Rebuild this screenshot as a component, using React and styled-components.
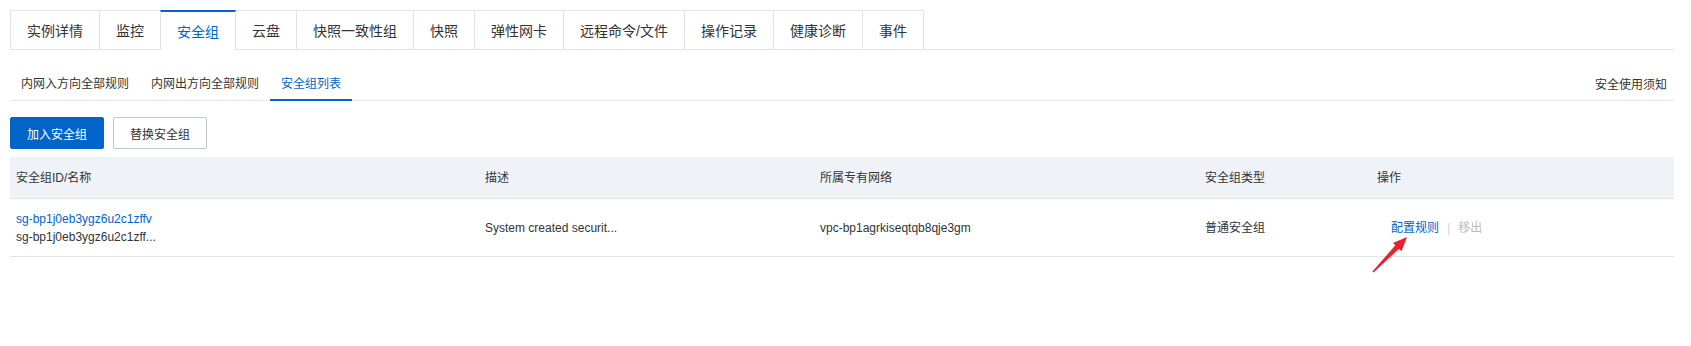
import React from "react";
import styled, { createGlobalStyle } from "styled-components";

const GlobalStyle = createGlobalStyle`
  html, body { margin: 0; padding: 0; background: #fff; }
  body {
    font-family: "Liberation Sans", "Noto Sans CJK SC", sans-serif;
    color: #333;
  }
  * { box-sizing: border-box; }
`;

const BLUE = "#0064c8";

const Page = styled.div`
  position: relative;
  padding: 10px 17px 0 10px;
  width: 1691px;
  height: 346px;
`;

const TabBar = styled.div`
  display: flex;
  border-bottom: 1px solid #e3e3e3;
  height: 40px;
`;

const Tab = styled.div`
  height: ${(p) => (p.$active ? "40px" : "39px")};
  padding: 0 16px;
  margin-left: -1px;
  display: flex;
  align-items: center;
  font-size: 14px;
  border: 1px solid #e3e3e3;
  border-bottom: none;
  border-top: ${(p) => (p.$active ? `2px solid ${BLUE}` : "1px solid #e3e3e3")};
  background: #fff;
  color: ${(p) => (p.$active ? BLUE : "#333")};
  white-space: nowrap;
  position: relative;
  z-index: ${(p) => (p.$active ? 1 : 0)};
  &:first-child { margin-left: 0; }
`;

const SubTabBar = styled.div`
  margin-top: 14px;
  display: flex;
  align-items: stretch;
  border-bottom: 1px solid #e5e5e5;
  height: 37px;
`;

const SubTab = styled.div`
  height: 37px;
  padding: 2px 11px 0;
  display: flex;
  align-items: center;
  font-size: 12px;
  color: ${(p) => (p.$active ? BLUE : "#333")};
  border-bottom: 2px solid ${(p) => (p.$active ? BLUE : "transparent")};
  white-space: nowrap;
`;

const SubTabNotice = styled.div`
  margin-left: auto;
  padding: 2px 7px 0 0;
  display: flex;
  align-items: center;
  font-size: 12px;
  color: #333;
`;

const Toolbar = styled.div`
  display: flex;
  gap: 9px;
  margin-top: 16px;
`;

const Button = styled.button`
  height: 32px;
  padding: 0 16px;
  font-family: inherit;
  font-size: 12px;
  border-radius: 2px;
  border: 1px solid ${(p) => (p.$primary ? BLUE : "#c0c6cc")};
  background: ${(p) => (p.$primary ? BLUE : "#fff")};
  color: ${(p) => (p.$primary ? "#fff" : "#333")};
  cursor: pointer;
`;

const Table = styled.div`
  position: relative;
  margin-top: 8px;
`;

const Row = styled.div`
  display: grid;
  grid-template-columns: 469px 335px 385px 172px 1fr;
  align-items: center;
  height: ${(p) => (p.$head ? "42px" : "58px")};
  background: ${(p) => (p.$head ? "#eff3f8" : "#fff")};
  border-bottom: 1px solid #e3e3e3;
  font-size: 12px;
  color: #333;
`;

const Cell = styled.div`
  padding-left: ${(p) => (p.$indent ? "20px" : "6px")};
  line-height: 18px;
  white-space: nowrap;
`;

const Link = styled.a`
  color: ${BLUE};
  text-decoration: none;
  display: block;
`;

const Actions = styled.div`
  display: flex;
  align-items: center;
  gap: 8px;
`;

const ActionLink = styled.a`
  color: ${BLUE};
  text-decoration: none;
`;

const Sep = styled.span`
  color: #d4d4d4;
`;

const Disabled = styled.span`
  color: #bbb;
`;

const Arrow = styled.svg`
  position: absolute;
  left: 1358px;
  top: 77px;
`;

const tabs = [
  "实例详情",
  "监控",
  "安全组",
  "云盘",
  "快照一致性组",
  "快照",
  "弹性网卡",
  "远程命令/文件",
  "操作记录",
  "健康诊断",
  "事件",
];

const subTabs = ["内网入方向全部规则", "内网出方向全部规则", "安全组列表"];

export default function App() {
  return (
    <>
      <GlobalStyle />
      <Page>
        <TabBar>
          {tabs.map((t) => (
            <Tab key={t} $active={t === "安全组"}>
              {t}
            </Tab>
          ))}
        </TabBar>
        <SubTabBar>
          {subTabs.map((t) => (
            <SubTab key={t} $active={t === "安全组列表"}>
              {t}
            </SubTab>
          ))}
          <SubTabNotice>安全使用须知</SubTabNotice>
        </SubTabBar>
        <Toolbar>
          <Button $primary>加入安全组</Button>
          <Button>替换安全组</Button>
        </Toolbar>
        <Table>
          <Row $head>
            <Cell>安全组ID/名称</Cell>
            <Cell>描述</Cell>
            <Cell>所属专有网络</Cell>
            <Cell>安全组类型</Cell>
            <Cell>操作</Cell>
          </Row>
          <Row>
            <Cell>
              <Link>sg-bp1j0eb3ygz6u2c1zffv</Link>
              <div>sg-bp1j0eb3ygz6u2c1zff...</div>
            </Cell>
            <Cell>System created securit...</Cell>
            <Cell>vpc-bp1agrkiseqtqb8qje3gm</Cell>
            <Cell>普通安全组</Cell>
            <Cell $indent>
              <Actions>
                <ActionLink>配置规则</ActionLink>
                <Sep>|</Sep>
                <Disabled>移出</Disabled>
              </Actions>
            </Cell>
          </Row>
          <Arrow width="44" height="44" viewBox="0 0 44 44">
            <polygon
              points="4.4,37.6 27.4,11.3 24.9,8.9 39,3 33.5,17.2 31,14.8 5.6,38.4"
              fill="#e8212a"
            />
          </Arrow>
        </Table>
      </Page>
    </>
  );
}
